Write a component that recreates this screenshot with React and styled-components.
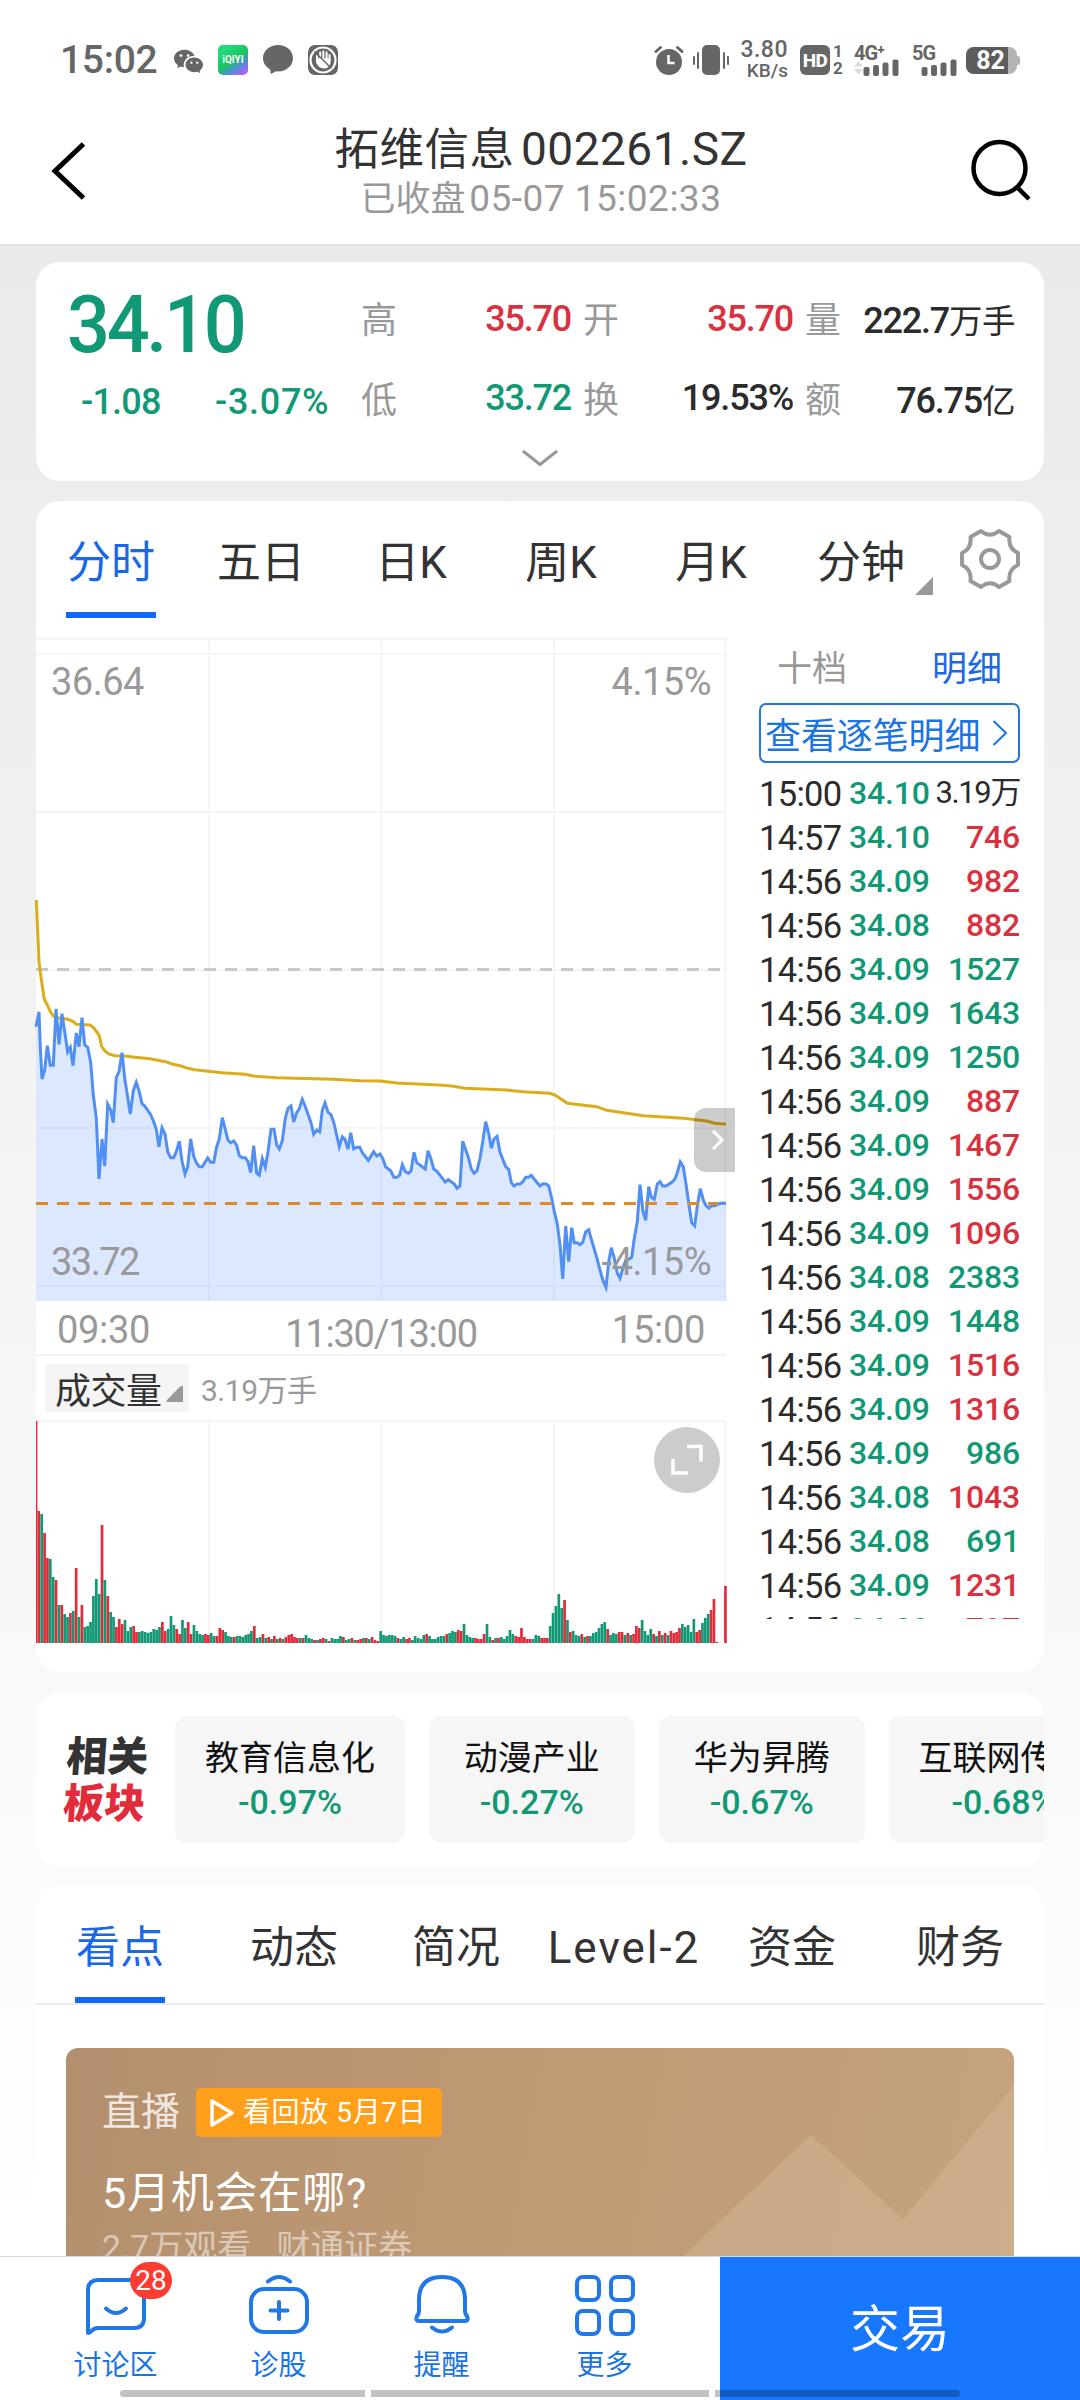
import styled, { createGlobalStyle, css } from "styled-components";
import { BsWechat } from "react-icons/bs";

const GREEN = "#119975";
const RED = "#d8323f";
const BLUE = "#1968e8";

/* prices are in thirds of a pixel, one pair per move of the line */
const MORNING = [
  [108,440],[117,395],[121,500],[126,597],[134,570],[142,497],[151,556],[160,556],[168,387],[177,493],
  [186,401],[194,455],[203,516],[211,502],[219,557],[229,459],[237,500],[246,413],[254,495],[263,502],
  [272,548],[280,645],[289,715],[297,897],[306,777],[314,858],[323,673],[332,690],[340,728],[349,592],
  [357,575],[366,518],[374,595],[391,702],[400,632],[409,607],[417,632],[426,671],[435,679],[452,704],
  [460,722],[469,748],[477,800],[486,743],[495,762],[503,815],[512,833],[521,833],[529,815],[538,784],
  [546,843],[555,882],[563,860],[572,777],[581,829],[589,848],[598,860],[607,860],[623,834],[632,847],
  [641,847],[650,800],[658,777],[667,713],[675,745],[684,781],[692,788],[701,783],[710,796],[718,827],
  [727,833],[736,833],[744,845],[752,878],[761,797],[770,880],[778,886],[787,836],[796,862],[804,815],
  [813,748],[822,748],[830,795],[838,807],[847,782],[856,715],[864,685],[873,678],[881,726],[890,698],
  [898,686],[907,658],[916,680],[933,728],[941,763],[950,750],[959,756],[967,690],[975,669],[984,697],
  [993,704],[1002,730],[1018,800],[1027,770],[1035,778],[1044,807],[1052,758],[1061,807],[1070,802],
  [1079,802],[1088,820],[1105,841],[1121,815],[1130,828],[1140,822],
];

const AFTERNOON = [
  [68,355],[77,381],[92,392],[101,412],[111,412],[119,405],[127,374],[136,395],[145,400],[153,393],
  [162,337],[170,368],[196,387],[204,332],[213,357],[221,387],[230,393],[240,406],[256,426],[265,419],
  [283,432],[291,445],[300,438],[308,304],[325,352],[334,387],[342,400],[351,392],[360,355],[368,306],
  [377,245],[386,280],[394,325],[402,297],[411,289],[420,336],[437,380],[446,388],[454,428],[462,438],
  [471,432],[480,432],[488,426],[497,412],[506,412],[514,406],[523,418],[540,438],[549,431],[558,432],
  [566,438],[575,475],[583,515],[592,552],[600,615],[608,717],[617,558],[626,665],[635,563],[643,608],
  [652,608],[660,614],[668,607],[677,576],[686,569],[694,598],[711,655],[720,690],[729,722],[738,742],
  [746,665],[754,623],[763,655],[772,700],[780,715],[789,683],[797,662],[806,658],[815,652],[823,595],
  [832,545],[840,434],[849,515],[857,541],[866,440],[874,472],[883,478],[892,432],[900,425],[908,438],
  [918,438],[935,427],[944,418],[952,398],[961,366],[970,380],[978,432],[987,495],[995,548],[1004,557],
  [1013,490],[1021,446],[1030,480],[1038,497],[1047,504],[1055,497],[1064,497],[1080,490],[1098,490],
];

const AVG_MORNING = [
  [109,60],[117,245],[122,285],[133,358],[142,375],[151,395],[160,408],[180,415],[200,417],[219,424],
  [229,433],[270,435],[280,442],[297,465],[305,500],[315,513],[325,521],[345,527],[375,528],[405,532],
  [450,536],[500,546],[520,553],[540,557],[560,564],[585,569],[625,574],[665,578],[735,583],[765,589],
  [830,593],[1000,598],[1080,602],[1140,603],
];

const AVG_AFTERNOON = [
  [110,129],[250,136],[280,139],[315,145],[440,150],[490,155],[568,160],[585,165],[622,190],[710,200],
  [740,211],[850,227],[970,235],[1040,243],[1065,250],[1098,253],
];

const toPoints = (morning, afternoon) => [
  ...morning.map(([x, y]) => [(x - 108) / 3, (y + 729) / 3]),
  ...afternoon.map(([x, y]) => [(x + 972) / 3, (y + 1209) / 3]),
].map(([x, y]) => `${x.toFixed(1)},${y.toFixed(1)}`).join(" ");

const pricePoints = toPoints(MORNING, AFTERNOON);
const avgPoints = toPoints(AVG_MORNING, AVG_AFTERNOON);

/* one bar a minute, positive = red, negative = green */
const VOLUMES = [
  222,132,-129,110,85,-84,-66,63,-38,38,-29,-26,30,-32,75,-26,38,-16,-17,-21,-47,-64,-49,118,-63,47,-31,-26,16,24,
  19,-23,-12,-16,17,11,-11,-12,-11,-10,-11,-14,-13,-16,21,12,-14,-27,-18,14,9,-23,-15,21,9,-18,-12,-9,-8,9,
  8,-10,-7,7,15,13,-11,-7,-6,6,-7,-7,-6,-8,-9,-12,17,-5,-6,9,-5,6,-4,7,-4,5,-4,6,8,9,
  6,5,-5,5,-8,-5,-4,3,-3,4,5,-4,2,-5,-4,-4,-7,6,-3,-4,5,-3,3,4,-5,5,-4,6,3,2,
  -12,-8,-7,-8,-8,-7,5,-4,-6,4,5,-3,-7,-5,-4,-8,9,-7,-4,-4,-6,-7,-7,9,-10,-12,-11,13,12,-19,
  -8,-6,-5,5,4,4,9,-19,-6,3,-5,5,-6,-4,-7,-13,-9,7,6,15,6,4,4,-4,-8,-7,5,5,5,-17,
  -30,-37,-49,-35,43,-23,11,-12,-8,-7,9,-6,7,-7,-10,-11,-15,-19,-21,14,-8,-10,-9,11,11,-8,10,-8,9,17,
  15,-23,-12,-8,-14,9,-7,12,-8,10,-8,12,10,11,15,-19,-16,-18,-11,-24,11,13,-20,-25,-29,33,44,1,0,0,
  57,
];

const STEP = 689.5 / 240;

const TRADES = [
  ["15:00", "34.10", "3.19万", "#2b2b2b"],
  ["14:57", "34.10", "746", RED],
  ["14:56", "34.09", "982", RED],
  ["14:56", "34.08", "882", RED],
  ["14:56", "34.09", "1527", GREEN],
  ["14:56", "34.09", "1643", GREEN],
  ["14:56", "34.09", "1250", GREEN],
  ["14:56", "34.09", "887", RED],
  ["14:56", "34.09", "1467", RED],
  ["14:56", "34.09", "1556", RED],
  ["14:56", "34.09", "1096", RED],
  ["14:56", "34.08", "2383", GREEN],
  ["14:56", "34.09", "1448", GREEN],
  ["14:56", "34.09", "1516", RED],
  ["14:56", "34.09", "1316", RED],
  ["14:56", "34.09", "986", GREEN],
  ["14:56", "34.08", "1043", RED],
  ["14:56", "34.08", "691", GREEN],
  ["14:56", "34.09", "1231", RED],
  ["14:56", "34.09", "797", RED],
];

const SECTORS = [
  ["教育信息化", "-0.97%"],
  ["动漫产业", "-0.27%"],
  ["华为昇腾", "-0.67%"],
  ["互联网传媒", "-0.68%"],
];

const StatusIcons = () => (
  <>
    <Clock>15:02</Clock>
    <StatusLeft>
      <BsWechat size={29} />
      <Iqiyi>iQIYI</Iqiyi>
      <svg width="30" height="30" viewBox="0 0 30 30">
        <path d="M15 0C6.7 0 0 5.8 0 13.2c0 4.7 2.8 8.8 7.2 11.2l.6 4.6 5.2-2.7c.7.1 1.3.1 2 .1 8.3 0 15-5.900 15-13.200S23.3 0 15 0z" fill="#666" />
      </svg>
      <svg width="30" height="30" viewBox="0 0 30 30" fill="none">
        <rect width="30" height="30" rx="7" fill="#666" />
        <circle cx="15" cy="15" r="12.5" stroke="#fff" strokeWidth="2.2" />
        <path d="M9 15.5V11M12.2 14V7.5M15.4 14V6.5M18.6 14.5V7.5M21.5 16V10" stroke="#fff" strokeWidth="2" strokeLinecap="round" />
        <path d="M8 13.5h14.5v3.5c0 4-2.8 6.5-6.5 6.5-4.5 0-6-3-8-6z" fill="#fff" />
        <path d="M6.5 6.5l17 17" stroke="#666" strokeWidth="1.5" />
      </svg>
    </StatusLeft>
    <StatusRight>
      <svg width="30" height="30" viewBox="0 0 30 30" fill="none">
        <circle cx="15" cy="17" r="13" fill="#666" />
        <path d="M2 6.5l4.5-4M28 6.5l-4.5-4" stroke="#666" strokeWidth="3" strokeLinecap="round" />
        <path d="M14.5 10v8h6" stroke="#fff" strokeWidth="2.5" />
      </svg>
      <svg width="36" height="30" viewBox="0 0 36 30">
        <rect x="9" width="18" height="30" rx="5" fill="#666" />
        <path d="M1 12v7M5 8v15M31 8v15M35 12v7" stroke="#666" strokeWidth="2" strokeLinecap="round" />
      </svg>
      <Speed><span>3.80</span><small>KB/s</small></Speed>
      <HdBox>HD</HdBox>
      <SimPair><span>1</span><span>2</span></SimPair>
      <Signal $gap={13}>
        <span>4G⁺</span>
        <Bars />
      </Signal>
      <Signal>
        <span>5G</span>
        <Bars plain />
      </Signal>
      <Battery><BatteryFill>82</BatteryFill></Battery>
    </StatusRight>
  </>
);

const Bars = ({ plain }) => (
  <svg width="45" height="17" viewBox="0 0 45 17" fill="#666">
    {plain ? null : <path d="M0 7.5L4.500 2 9 7.500zM0 10h9l-4.500 5.500z" fill="#ddd" />}
    <rect x="9.5" y="8" width="6" height="9" rx="2" />
    <rect x="19" y="6" width="6" height="11" rx="2" />
    <rect x="28.5" y="3.5" width="6" height="13.5" rx="2" />
    <rect x="38.5" y=".5" width="6" height="16.5" rx="2" />
  </svg>
);

const Gear = () => (
  <svg width="64" height="64" viewBox="0 0 64 64" fill="none" stroke="#999" strokeWidth="4" strokeLinejoin="round">
    <path d="M23 4q9 7.500 18 0l10.500 6q-1.500 11.500 8.500 16v12q-10 4.500-8.500 16l-10.500 6q-9-7.500-18 0l-10.500-6q1.500-11.500-8.500-16v-12q10-4.500 8.500-16z" />
    <circle cx="32" cy="32" r="9" />
  </svg>
);

const PriceChart = () => (
  <ChartSvg width="690" height="664" viewBox="0 0 690 664" fill="none">
    <path d="M0 2h690M0 17h690M0 175h690M0 333h690M0 491h690M0 649h690M173 0v664M345.5 0v664M518 0v664M689.5 0v664" stroke="#f5f5f5" strokeWidth="2" />
    <path d="M0 332.5h690" stroke="#c8c8c8" strokeWidth="3" strokeDasharray="12 9" />
    <polygon points={`0,664 ${pricePoints} 690,664`} fill="#508cff" fillOpacity=".2" />
    <polyline points={avgPoints} stroke="#dbad1b" strokeWidth="3" strokeLinejoin="round" />
    <polyline points={pricePoints} stroke="#528ff2" strokeWidth="3" />
    <path d="M0 566.5h682" stroke="#e08a25" strokeWidth="3" strokeDasharray="12 9" />
  </ChartSvg>
);

const VolumeChart = () => (
  <ChartSvg width="691" height="223" viewBox="0 0 691 223" fill="none">
    <path d="M0 1h690M173 0v223M345.5 0v223M518 0v223M689.5 0v223" stroke="#f5f5f5" strokeWidth="2" />
    {VOLUMES.map((v, i) => (
      <rect
        key={i}
        x={i ? i * STEP - 1.4 : 0}
        y={223 - Math.abs(v)}
        width={i ? 2.7 : 1.4}
        height={Math.abs(v)}
        fill={v > 0 ? "#e32b3a" : GREEN}
      />
    ))}
  </ChartSvg>
);

const App = () => {
  return (
    <Screen>
      <GlobalStyle />
      <TopArea>
        <StatusBar><StatusIcons /></StatusBar>
        <TitleBar>
          <svg width="36" height="58" viewBox="0 0 36 58" fill="none">
            <path d="M33.5 2L5 29l28.5 27" stroke="#000" strokeWidth="5" />
          </svg>
          <TitleText>
            <Title>拓维信息 <span>002261.SZ</span></Title>
            <Subtitle>已收盘 <span>05-07 15:02:33</span></Subtitle>
          </TitleText>
          <svg width="62" height="64" viewBox="0 0 62 64" fill="none" stroke="#000" strokeWidth="4.5">
            <circle cx="29.5" cy="30" r="26" />
            <path d="M47 49l12 12" />
          </svg>
        </TitleBar>
      </TopArea>

      <Content>
        <QuoteCard>
          <QuoteGrid>
            <Price>34.10</Price>
            <Label>高</Label><Figure $color={RED}>35.70</Figure>
            <Label>开</Label><Figure $color={RED}>35.70</Figure>
            <Label>量</Label><Figure>222.7<i>万手</i></Figure>
            <Change><span>-1.08</span><span>-3.07%</span></Change>
            <Label>低</Label><Figure $color={GREEN}>33.72</Figure>
            <Label>换</Label><Figure>19.53%</Figure>
            <Label>额</Label><Figure>76.75<i>亿</i></Figure>
          </QuoteGrid>
          <svg width="38" height="19" viewBox="0 0 38 19" fill="none">
            <path d="M2 2l17 13.5L36 2" stroke="#999" strokeWidth="3" />
          </svg>
        </QuoteCard>

        <ChartCard>
          <PeriodTabs>
            <Tab $active>分时</Tab>
            <Tab>五日</Tab>
            <Tab>日K</Tab>
            <Tab>周K</Tab>
            <Tab>月K</Tab>
            <Tab>分钟<Corner /></Tab>
            <GearBox><Gear /></GearBox>
          </PeriodTabs>
          <ChartBody>
            <Charts>
              <PriceArea>
                <PriceChart />
                <Tag $top={25} $left={15}>36.64</Tag>
                <Tag $top={25} $right={15}>4.15%</Tag>
                <Tag $top={605} $left={15} $tight>33.72</Tag>
                <Tag $top={605} $right={15}>-4.15%</Tag>
                <Expand>
                  <svg width="14" height="22" viewBox="0 0 14 22" fill="none">
                    <path d="M2 2l9 9-9 9" stroke="#fff" strokeWidth="3" />
                  </svg>
                </Expand>
              </PriceArea>
              <TimeAxis>
                <span>09:30</span><span>11:30/13:00</span><span>15:00</span>
              </TimeAxis>
              <VolumeHead>
                <VolumeSelect>成交量
                  <svg width="18" height="18" viewBox="0 0 18 18"><path d="M17 1v16H2q-2 0-1-2L14 1.500z" fill="#999" /></svg>
                </VolumeSelect>
                <span>3.19万手</span>
              </VolumeHead>
              <VolumeArea>
                <VolumeChart />
                <Fullscreen>
                  <svg width="34" height="34" viewBox="0 0 34 34" fill="none" stroke="#fff" strokeWidth="3.5">
                    <path d="M17 3.5h14v15M3 16v14h15" />
                  </svg>
                </Fullscreen>
              </VolumeArea>
            </Charts>
            <Side>
              <SideTabs><span>十档</span><b>明细</b></SideTabs>
              <DetailButton>
                查看逐笔明细
                <svg width="16" height="28" viewBox="0 0 16 28" fill="none">
                  <path d="M1.5 2l12.5 12-12.5 12" stroke="#1a74e2" strokeWidth="2" />
                </svg>
              </DetailButton>
              <TradeList>
                {TRADES.map(([time, price, vol, color], i) => (
                  <Trade key={i}>
                    <TradeTime>{time}</TradeTime>
                    <TradePrice>{price}</TradePrice>
                    <TradeVol $color={color} $small={i === 0}>{vol}</TradeVol>
                  </Trade>
                ))}
              </TradeList>
            </Side>
          </ChartBody>
        </ChartCard>

        <SectorCard>
          <SectorLogo><span>相关</span><b>板块</b></SectorLogo>
          {SECTORS.map(([name, change]) => (
            <Sector key={name}>
              <span>{name}</span>
              <b>{change}</b>
            </Sector>
          ))}
        </SectorCard>

        <NewsCard>
          <NewsTabs>
            <NewsTab $active>看点</NewsTab>
            <NewsTab $shift={12}>动态</NewsTab>
            <NewsTab>简况</NewsTab>
            <NewsTab $wide>Level-2</NewsTab>
            <NewsTab>资金</NewsTab>
            <NewsTab>财务</NewsTab>
          </NewsTabs>
          <Banner>
            <Mountains width="948" height="208" viewBox="0 0 948 208">
              <path d="M617 208L745 87l92 84L948 37v171z" fill="#ddc0a0" fillOpacity=".35" />
            </Mountains>
            <LiveRow>
              直播
              <Replay>
                <svg width="26" height="30" viewBox="0 0 26 30" fill="none">
                  <path d="M3 3v24L23 15z" stroke="#fff" strokeWidth="3.5" strokeLinejoin="round" />
                </svg>
                看回放 5月7日
              </Replay>
            </LiveRow>
            <BannerTitle>5月机会在哪?</BannerTitle>
            <BannerMeta><span>2.7万观看</span><span>财通证券</span></BannerMeta>
          </Banner>
        </NewsCard>
      </Content>

      <BottomBar>
        <NavItems>
          <NavItem>
            <svg viewBox="0 0 64 64">
              <path d="M4 60V17.5Q4 7 14 7h36q10 0 10 10v28q0 10-10 10H14q-4 0-7 3.500-3 2.500-3 .500z" />
              <path d="M22 35.5q10 9 20 0" />
            </svg>
            讨论区
            <Badge>28</Badge>
          </NavItem>
          <NavItem>
            <svg viewBox="0 0 64 64">
              <rect x="4" y="16" width="56" height="43" rx="13" />
              <path d="M21 8.5q11-9 22 0M32 29v17M23.5 37.5h17" />
            </svg>
            诊股
          </NavItem>
          <NavItem>
            <svg viewBox="0 0 64 64">
              <path d="M9 38V27Q9 4 32 4t23 23v11q0 3 2 5 2 5-2 5H9q-4 0-2-5 2-2 2-5z" />
              <path d="M22 54.5q10 8 20 0" />
            </svg>
            提醒
          </NavItem>
          <NavItem>
            <svg viewBox="0 0 64 64">
              <rect x="4" y="4" width="22" height="23" rx="6" />
              <rect x="38" y="4" width="22" height="23" rx="6" />
              <rect x="4" y="38" width="22" height="23" rx="6" />
              <rect x="38" y="38" width="22" height="23" rx="6" />
            </svg>
            更多
          </NavItem>
        </NavItems>
        <TradeButton>交易</TradeButton>
        <HomeBar><i /><i /><i /></HomeBar>
      </BottomBar>
    </Screen>
  )
}

const GlobalStyle = createGlobalStyle`
  * {
    box-sizing: border-box;
  }

  body {
    margin: 0;
    font-family: Roboto, "Noto Sans CJK SC", sans-serif;
    color: #333;
  }

  svg {
    display: block;
    flex: none;
  }

  i {
    font-style: normal;
  }
`

const Screen = styled.div`
  display: flex;
  flex-direction: column;
  width: 1080px;
  height: 2400px;
  overflow: hidden;
  background: linear-gradient(#eaeaea 246px, #fff 2250px);
`

const TopArea = styled.header`
  flex: none;
  height: 246px;
  background-color: #fff;
  border-bottom: 2px solid #e0e0e0;
`

const StatusBar = styled.div`
  display: flex;
  align-items: center;
  height: 96px;
  padding: 24px 60px 0 60px;
  color: #666;
`

const Clock = styled.div`
  width: 114px;
  font-size: 39px;
  font-weight: 500;
  letter-spacing: -.3px;
`

const StatusLeft = styled.div`
  display: flex;
  align-items: center;
  gap: 15px;
`

const StatusRight = styled.div`
  display: flex;
  align-items: center;
  margin-left: auto;

  > svg {
    margin-right: 9px;
  }
`

const Iqiyi = styled.div`
  width: 30px;
  height: 30px;
  border-radius: 5px;
  background: linear-gradient(145deg, #1fd97a 20%, #15c65c 50%, #4f8fd0 70%, #b45cff 92%);
  color: #fff;
  font-size: 10px;
  font-weight: 700;
  line-height: 30px;
  text-align: center;
`

const Speed = styled.div`
  display: flex;
  flex-direction: column;
  align-items: flex-end;
  width: 50px;
  margin-right: 12px;
  font-size: 23px;
  font-weight: 500;
  line-height: 22px;
  letter-spacing: .5px;

  small {
    font-size: 19px;
    line-height: 20px;
    letter-spacing: 0;
  }
`

const HdBox = styled.div`
  width: 30px;
  height: 30px;
  border-radius: 6px;
  background-color: #666;
  color: #fff;
  font-size: 19px;
  font-weight: 800;
  line-height: 31px;
  text-align: center;
  letter-spacing: -.5px;
`

const SimPair = styled.div`
  display: flex;
  flex-direction: column;
  width: 24px;
  padding-left: 3px;
  font-size: 17px;
  font-weight: 700;
  line-height: 17px;
`

const Signal = styled.div`
  display: flex;
  flex-direction: column;
  width: 45px;
  margin-right: ${p => p.$gap || 9}px;
  font-size: 20px;
  font-weight: 700;
  line-height: 16px;
  letter-spacing: -1px;

  svg {
    margin-top: -2px;
  }
`

const Battery = styled.div`
  position: relative;
  width: 51px;
  height: 27px;
  margin-right: 3px;
  border-radius: 8px;
  background-color: #b3b3b3;

  &::after {
    content: "";
    position: absolute;
    right: -3px;
    top: 9px;
    width: 4px;
    height: 9px;
    border-radius: 2px;
    background-color: #b3b3b3;
  }
`

const BatteryFill = styled.div`
  width: 42px;
  height: 27px;
  padding-left: 7px;
  border-radius: 8px 0 0 8px;
  background-color: #5c5c5c;
  color: #fff;
  font-size: 25px;
  font-weight: 700;
  line-height: 28px;
  text-align: center;
`

const TitleBar = styled.div`
  display: flex;
  justify-content: space-between;
  align-items: flex-start;
  height: 148px;
  padding: 20px 48px 0 50px;

  > svg {
    margin-top: 22px;
  }

  > svg:first-child {
    margin-top: 26px;
    margin-right: 26px;
  }
`

const TitleText = styled.div`
  display: flex;
  flex-direction: column;
  align-items: center;
`

const Title = styled.div`
  font-size: 44.5px;
  line-height: 66px;
  letter-spacing: .5px;
  white-space: nowrap;

  span {
    margin-left: -5px;
    font-size: 46px;
  }
`

const Subtitle = styled.div`
  font-size: 35px;
  line-height: 32px;
  color: #999;
  white-space: nowrap;

  span {
    margin-left: -5px;
    font-size: 37px;
    letter-spacing: .5px;
  }
`

const Content = styled.main`
  display: flex;
  flex-direction: column;
  flex: 1;
  min-height: 0;
  gap: 20px;
  padding: 16px 36px 0;
  overflow: hidden;
`

const Card = styled.section`
  flex: none;
  border-radius: 24px;
  background-color: #fff;
`

const QuoteCard = styled(Card)`
  display: flex;
  flex-direction: column;
  align-items: center;
  height: 219px;
  padding-top: 16px;
`

const QuoteGrid = styled.div`
  display: grid;
  grid-template-columns: 294px 36px 174px 48px 174px 48px 174px;
  grid-template-rows: 80px 79px;
  align-items: center;
  width: 1008px;
  height: 159px;
  padding-left: 31px;
  margin-bottom: 12px;
`

const Price = styled.div`
  padding-top: 14px;
  font-size: 80px;
  font-weight: 500;
  line-height: 80px;
  letter-spacing: -3.5px;
  color: ${GREEN};
  transform: scaleX(.945);
  transform-origin: 0 50%;
`

const Change = styled.div`
  display: flex;
  padding: 8px 0 0 14px;
  font-size: 36px;
  font-weight: 500;
  letter-spacing: -.8px;
  color: ${GREEN};

  span:first-child {
    width: 134px;
  }

  span:last-child {
    letter-spacing: .7px;
  }
`

const Label = styled.div`
  margin-top: -2px;
  font-size: 36px;
  color: #999;
  text-align: right;
`

const Figure = styled.div`
  padding-top: 1px;
  font-size: 36px;
  font-weight: 500;
  letter-spacing: -1.2px;
  text-align: right;
  color: ${p => p.$color || "#2b2b2b"};

  i {
    font-size: 33.5px;
    font-weight: 400;
    letter-spacing: -.5px;
  }
`

const ChartCard = styled(Card)`
  height: 1171px;
`

const PeriodTabs = styled.div`
  display: flex;
  height: 136px;
`

const tabBase = css`
  position: relative;
  padding-top: 13px;
  font-size: 44px;
  line-height: 98px;
  text-align: center;
  color: ${p => (p.$active ? BLUE : "#333")};

  &::after {
    content: "";
    display: ${p => (p.$active ? "block" : "none")};
    width: 90px;
    height: 6px;
    margin: 0 auto;
    background-color: #1268fc;
  }
`

const Tab = styled.div`
  ${tabBase}
  width: 150px;
`

const Corner = styled.i`
  position: absolute;
  right: 3px;
  top: 76px;
  width: 18px;
  height: 18px;
  background-color: #999;
  clip-path: polygon(100% 0, 100% 100%, 0 100%);
`

const GearBox = styled.div`
  width: 108px;
  padding: 26px 22px;
`

const ChartBody = styled.div`
  display: flex;
`

const Charts = styled.div`
  width: 723px;
`

const ChartSvg = styled.svg`
  overflow: visible;
`

const PriceArea = styled.div`
  position: relative;
  width: 690px;
  height: 664px;
`

const Tag = styled.span`
  position: absolute;
  top: ${p => p.$top}px;
  left: ${p => (p.$left ? `${p.$left}px` : "auto")};
  right: ${p => (p.$right ? `${p.$right}px` : "auto")};
  font-size: 38px;
  line-height: 40px;
  letter-spacing: ${p => (p.$tight ? -1.5 : -.5)}px;
  color: #999;
`

const Expand = styled.div`
  position: absolute;
  right: -9px;
  top: 471px;
  width: 41px;
  height: 64px;
  padding: 21px 0 0 17px;
  border-radius: 12px 0 0 12px;
  background-color: rgba(0, 0, 0, .2);
`

const TimeAxis = styled.div`
  display: flex;
  justify-content: space-between;
  width: 690px;
  height: 55px;
  padding: 7px 21px 0 21px;
  border-bottom: 2px solid #f2f2f2;
  font-size: 38px;
  letter-spacing: -.3px;
  color: #999;

  span:nth-child(2) {
    padding-top: 4px;
    letter-spacing: -1.2px;
  }
`

const VolumeHead = styled.div`
  display: flex;
  align-items: center;
  gap: 12px;
  height: 64px;
  padding-left: 9px;
  font-size: 30px;
  letter-spacing: -.5px;
  color: #999;
`

const VolumeSelect = styled.div`
  display: flex;
  align-items: center;
  gap: 4px;
  width: 144px;
  height: 48px;
  padding-left: 10px;
  background-color: #f5f5f5;
  font-size: 36px;
  color: #333;

  svg {
    margin-top: 12px;
  }
`

const VolumeArea = styled.div`
  position: relative;
  height: 223px;
`

const Fullscreen = styled.div`
  position: absolute;
  left: 618px;
  top: 7px;
  width: 66px;
  height: 66px;
  padding: 16px;
  border-radius: 50%;
  background-color: #ccc;
`

const Side = styled.div`
  width: 261px;
`

const SideTabs = styled.div`
  display: flex;
  justify-content: space-between;
  height: 66px;
  padding: 8px 18px 0 18px;
  font-size: 35px;
  line-height: 50px;
  color: #999;

  b {
    font-weight: 400;
    color: ${BLUE};
  }
`

const DetailButton = styled.div`
  display: flex;
  align-items: center;
  justify-content: space-between;
  height: 60px;
  padding: 0 10px 0 4px;
  border: 2px solid #2377d8;
  border-radius: 7px;
  font-size: 36px;
  letter-spacing: -.1px;
  white-space: nowrap;
  color: #1a74e2;
`

const TradeList = styled.div`
  height: 856px;
  padding-top: 8px;
  overflow: hidden;
`

const Trade = styled.div`
  display: flex;
  align-items: center;
  height: 44px;
  line-height: 44px;
`

const TradeTime = styled.span`
  width: 90px;
  padding-top: 2px;
  font-size: 34.5px;
  letter-spacing: -.7px;
  color: #2b2b2b;
`

const TradePrice = styled.span`
  font-size: 32px;
  font-weight: 500;
  letter-spacing: -.2px;
  color: ${GREEN};
`

const TradeVol = styled.span`
  margin-left: auto;
  font-size: ${p => (p.$small ? 31 : 32)}px;
  font-weight: ${p => (p.$small ? 400 : 500)};
  letter-spacing: ${p => (p.$small ? -1.4 : -.2)}px;
  color: ${p => p.$color};
`

const SectorCard = styled(Card)`
  display: flex;
  align-items: center;
  gap: 23.5px;
  height: 173px;
  margin-top: 1px;
  overflow: hidden;
`

const SectorLogo = styled.div`
  display: flex;
  flex-direction: column;
  flex: none;
  width: 115.5px;
  padding: 3px 0 0 29px;
  font-size: 41px;
  font-weight: 900;
  line-height: 47px;
  transform: skewX(-4deg);
  color: #333;

  b {
    color: #e22c3b;
    font-weight: 900;
  }
`

const Sector = styled.div`
  display: flex;
  flex-direction: column;
  align-items: center;
  flex: none;
  min-width: 206.5px;
  height: 127px;
  padding: 18px 30px 0;
  border-radius: 12px;
  background-color: #f6f6f6;
  font-size: 34px;
  line-height: 48px;
  color: #111;

  b {
    font-size: 34px;
    font-weight: 500;
    line-height: 41px;
    color: ${GREEN};
  }
`

const NewsCard = styled(Card)`
  height: 400px;
`

const NewsTabs = styled.div`
  display: flex;
  height: 119px;
  border-bottom: 2px solid #ececec;
`

const NewsTab = styled.div`
  ${tabBase}
  width: 168px;
  padding-left: ${p => p.$shift || 0}px;
  letter-spacing: ${p => (p.$wide ? 2 : 0)}px;
`

const Banner = styled.div`
  position: relative;
  height: 260px;
  margin: 43px 30px 0;
  padding: 40px 36px 0;
  border-radius: 12px;
  background: linear-gradient(100deg, #b38f6d, #bd9974 45%, #c6a37f);
  color: #fff;
`

const Mountains = styled.svg`
  position: absolute;
  left: 0;
  top: 0;
`

const LiveRow = styled.div`
  display: flex;
  align-items: center;
  gap: 16px;
  font-size: 39px;
  line-height: 49px;
  color: rgba(255, 255, 255, .8);
`

const Replay = styled.div`
  display: flex;
  align-items: center;
  gap: 8px;
  width: 246px;
  height: 49px;
  padding-left: 13px;
  border-radius: 5px;
  background-color: #ff9f1a;
  font-size: 28px;
  letter-spacing: .6px;
  color: #fff;
  white-space: nowrap;
`

const BannerTitle = styled.div`
  margin-top: 24px;
  font-size: 43px;
  line-height: 64px;
  letter-spacing: .8px;
`

const BannerMeta = styled.div`
  display: flex;
  gap: 25px;
  margin-top: -3px;
  font-size: 34px;
  line-height: 50px;
  color: rgba(255, 255, 255, .5);
`

const BottomBar = styled.footer`
  position: relative;
  display: flex;
  flex: none;
  height: 144px;
  border-top: 1px solid #dcdcdc;
  background-color: #fff;
`

const NavItems = styled.div`
  display: flex;
  width: 720px;
  padding: 16px 34px 0;
`

const NavItem = styled.div`
  position: relative;
  display: flex;
  flex-direction: column;
  align-items: center;
  width: 163px;
  font-size: 28px;
  line-height: 40px;
  color: #1a74e2;

  svg {
    width: 64px;
    height: 64px;
    margin-bottom: 9px;
    fill: none;
    stroke: #2277e6;
    stroke-width: 4;
    stroke-linecap: round;
    stroke-linejoin: round;
  }
`

const Badge = styled.span`
  position: absolute;
  left: 96px;
  top: -11px;
  width: 42px;
  height: 37px;
  border-radius: 19px;
  background-color: #fd3b31;
  color: #fff;
  font-size: 28px;
  line-height: 38px;
  text-align: center;
`

const TradeButton = styled.div`
  width: 360px;
  background-color: #1777ff;
  color: #fff;
  font-size: 50px;
  line-height: 147px;
  text-align: center;
`

const HomeBar = styled.div`
  position: absolute;
  left: 120px;
  bottom: 3px;
  display: grid;
  grid-template-columns: 245px 338px 245px;
  gap: 6px;
  height: 7px;
  border-radius: 4px;
  overflow: hidden;

  i {
    background-color: rgba(0, 0, 0, .24);
  }
`

export default App;
